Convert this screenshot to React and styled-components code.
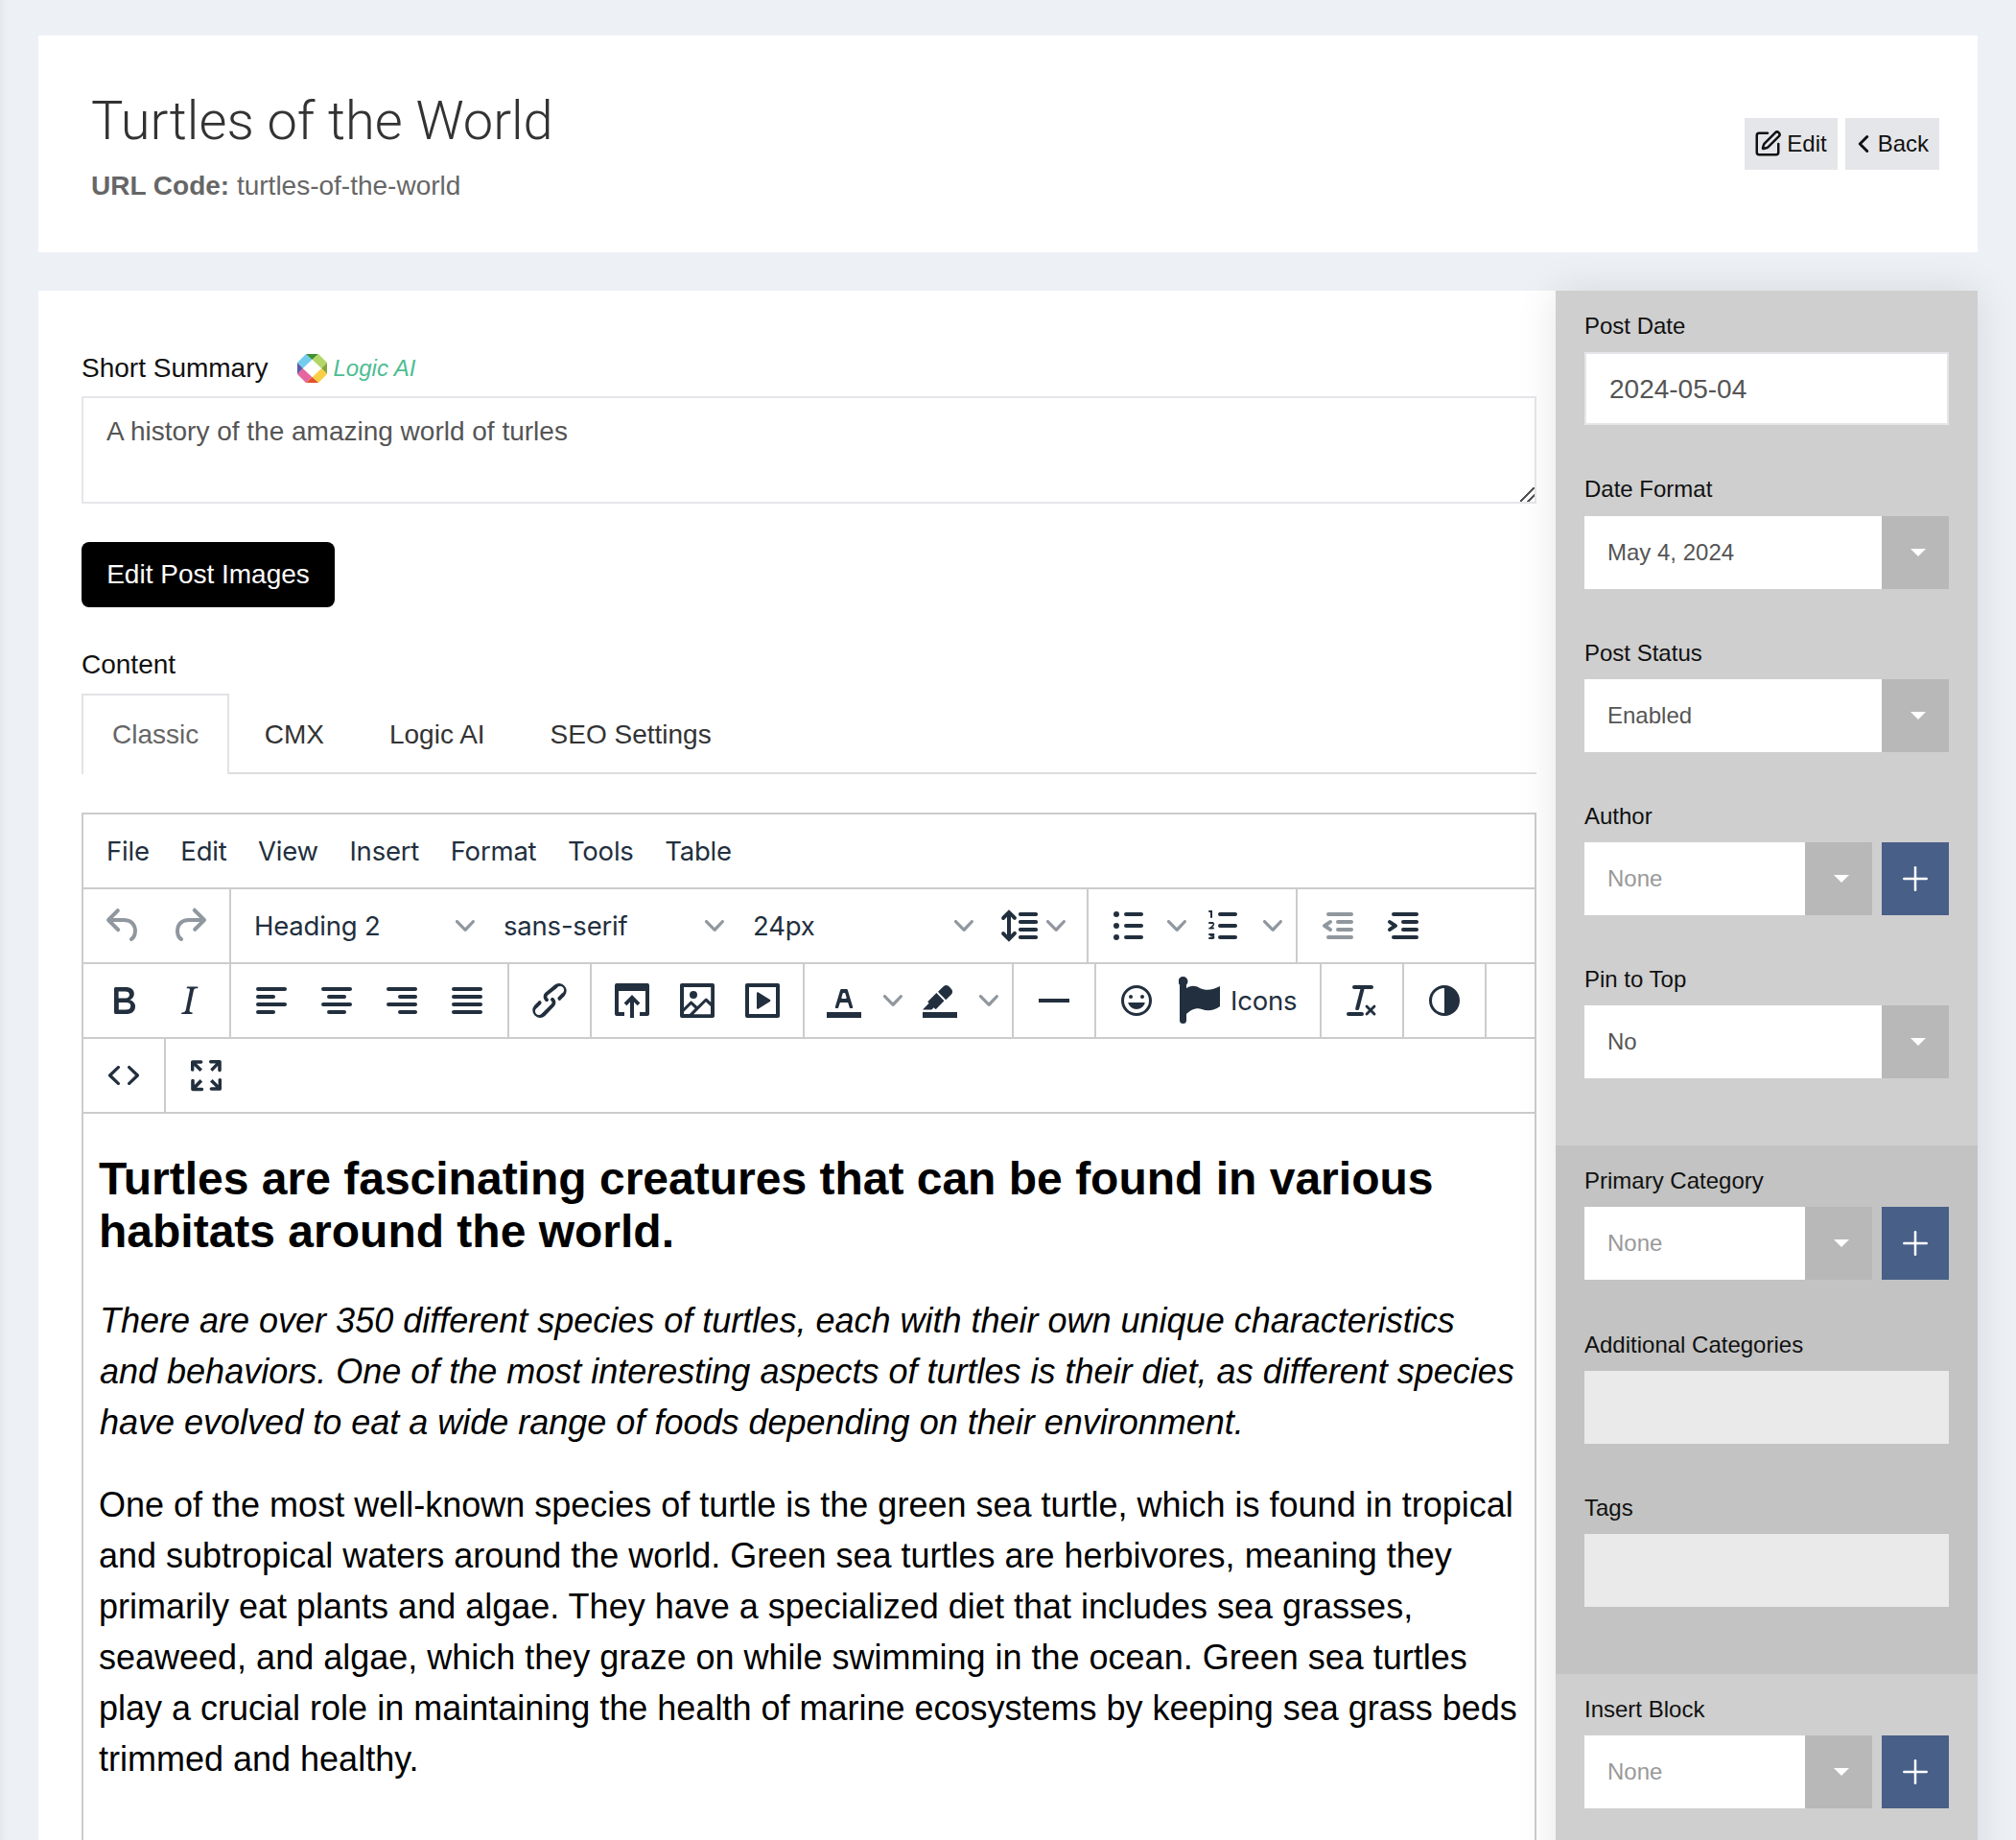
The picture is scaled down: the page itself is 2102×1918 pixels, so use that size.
import React from 'react'
import styled, { createGlobalStyle } from 'styled-components'
import { SquarePen, ChevronLeft, Plus } from 'lucide-react'

const GlobalStyle = createGlobalStyle`
  html, body {
    margin: 0;
    padding: 0;
    height: 100%;
    overflow: hidden;
    background: #edf0f5;
  }
  * { box-sizing: border-box; }
`

// tinymce style icons, 24 unit box
const ICONS = {
  undo: 'M6.4 8H12c3.7 0 6.2 2 6.8 5.1.6 2.7-.4 5.6-2.3 6.8a1 1 0 0 1-1-1.8c1.1-.6 1.8-2.7 1.4-4.6-.5-2.1-2.1-3.5-4.9-3.5H6.4l3.3 3.3a1 1 0 1 1-1.4 1.4l-5-5a1 1 0 0 1 0-1.4l5-5a1 1 0 0 1 1.4 1.4L6.4 8Z',
  redo: 'M17.6 10H12c-2.8 0-4.4 1.4-4.9 3.5-.4 2 .3 4 1.4 4.6a1 1 0 1 1-1 1.8c-2-1.2-2.9-4.1-2.3-6.8.6-3 3-5.1 6.8-5.1h5.6l-3.3-3.3a1 1 0 1 1 1.4-1.4l5 5a1 1 0 0 1 0 1.4l-5 5a1 1 0 0 1-1.4-1.4l3.3-3.3Z',
  bold: 'M7.8 19c-.3 0-.5 0-.6-.2l-.2-.5V5.7c0-.2 0-.4.2-.5l.6-.2h5c1.5 0 2.7.3 3.5 1 .7.6 1.1 1.4 1.1 2.5a3 3 0 0 1-.6 1.9c-.4.6-1 1-1.6 1.2.4.1.9.3 1.3.6s.8.7 1 1.2c.4.4.5 1 .5 1.6 0 1.3-.4 2.3-1.3 3-.8.7-2.1 1-3.8 1H7.8Zm5-8.3c.6 0 1.2-.1 1.6-.5.4-.3.6-.7.6-1.3 0-1.1-.8-1.7-2.3-1.7H9.3v3.5h3.4Zm.5 6c.7 0 1.3-.1 1.7-.4.4-.4.6-.9.6-1.5s-.2-1-.7-1.4c-.4-.3-1-.4-2-.4H9.4v3.8h4Z',
  italic: 'm16.7 4.7-.1.9h-.3c-.6 0-1 0-1.4.3-.3.3-.4.6-.5 1.1l-2.1 9.8v.6c0 .5.4.8 1.4.8h.2l-.2.8H8l.2-.8h.2c1.1 0 1.8-.5 2-1.5l2-9.8.1-.5c0-.6-.4-.8-1.4-.8h-.3l.2-.9h5.8Z',
  alignLeft: 'M5 5h14c.6 0 1 .4 1 1s-.4 1-1 1H5a1 1 0 1 1 0-2Zm0 4h8c.6 0 1 .4 1 1s-.4 1-1 1H5a1 1 0 1 1 0-2Zm0 8h8c.6 0 1 .4 1 1s-.4 1-1 1H5a1 1 0 0 1 0-2Zm0-4h14c.6 0 1 .4 1 1s-.4 1-1 1H5a1 1 0 0 1 0-2Z',
  alignCenter: 'M5 5h14c.6 0 1 .4 1 1s-.4 1-1 1H5a1 1 0 1 1 0-2Zm3 4h8c.6 0 1 .4 1 1s-.4 1-1 1H8a1 1 0 1 1 0-2Zm0 8h8c.6 0 1 .4 1 1s-.4 1-1 1H8a1 1 0 0 1 0-2Zm-3-4h14c.6 0 1 .4 1 1s-.4 1-1 1H5a1 1 0 0 1 0-2Z',
  alignRight: 'M5 5h14c.6 0 1 .4 1 1s-.4 1-1 1H5a1 1 0 1 1 0-2Zm6 4h8c.6 0 1 .4 1 1s-.4 1-1 1h-8a1 1 0 0 1 0-2Zm0 8h8c.6 0 1 .4 1 1s-.4 1-1 1h-8a1 1 0 0 1 0-2Zm-6-4h14c.6 0 1 .4 1 1s-.4 1-1 1H5a1 1 0 0 1 0-2Z',
  justify: 'M5 5h14c.6 0 1 .4 1 1s-.4 1-1 1H5a1 1 0 1 1 0-2Zm0 4h14c.6 0 1 .4 1 1s-.4 1-1 1H5a1 1 0 1 1 0-2Zm0 4h14c.6 0 1 .4 1 1s-.4 1-1 1H5a1 1 0 0 1 0-2Zm0 4h14c.6 0 1 .4 1 1s-.4 1-1 1H5a1 1 0 0 1 0-2Z',
  link: 'M6.2 12.3a1 1 0 0 1 1.4 1.4l-2 2a2 2 0 1 0 2.6 2.8l4.8-4.8a1 1 0 0 0 0-1.4 1 1 0 1 1 1.4-1.3 2.9 2.9 0 0 1 0 4L9.6 20a3.9 3.9 0 0 1-5.5-5.5l2-2Zm11.6-.6a1 1 0 0 1-1.4-1.4l2-2a2 2 0 1 0-2.6-2.8L11 9.3a1 1 0 0 0 0 1.4 1 1 0 1 1-1.4 1.3 2.9 2.9 0 0 1 0-4L14.4 4a3.9 3.9 0 0 1 5.5 5.5l-2 2Z',
  upload: 'M4 3h16a1 1 0 0 1 1 1v15a1 1 0 0 1-1 1h-4v-2h3V7H5v11h3v2H4a1 1 0 0 1-1-1V4a1 1 0 0 1 1-1ZM12 9l4.2 4.2-1.4 1.4-1.8-1.8V21h-2v-8.2l-1.8 1.8-1.4-1.4L12 9Z',
  image: 'm5 15.7 3.3-3.2c.3-.3.7-.3 1 0L12 15l4.1-4c.3-.4.8-.4 1 0l2 1.9V5H5v10.7ZM5 18v1h3l2.8-2.9-2-2L5 17.9Zm14-3-2.5-2.4-6.4 6.5H19v-4ZM4 3h16c.6 0 1 .4 1 1v16c0 .6-.4 1-1 1H4a1 1 0 0 1-1-1V4c0-.6.4-1 1-1Zm6 8a2 2 0 1 0 0-4 2 2 0 0 0 0 4Z',
  media: 'M4 3h16c.6 0 1 .4 1 1v16c0 .6-.4 1-1 1H4a1 1 0 0 1-1-1V4c0-.6.4-1 1-1Zm1 2v14h14V5H5Zm4 3.2c0-.5.5-.8.9-.5l6 3.8c.4.2.4.8 0 1l-6 3.8c-.4.3-.9 0-.9-.5V8.2Z',
  lineHeight: 'M21 5a1 1 0 0 1 .1 2H13a1 1 0 0 1-.1-2H21zm0 4a1 1 0 0 1 .1 2H13a1 1 0 0 1-.1-2H21zm0 4a1 1 0 0 1 .1 2H13a1 1 0 0 1-.1-2H21zm0 4a1 1 0 0 1 .1 2H13a1 1 0 0 1-.1-2H21zM7 3.6l3.7 3.7a1 1 0 0 1-1.3 1.5h-.1L8 7.3v9.2l1.3-1.3a1 1 0 0 1 1.3 0h.1c.4.4.4 1 0 1.3v.1L7 20.4l-3.7-3.7a1 1 0 0 1 1.3-1.5h.1L6 16.7V7.4L4.7 8.7a1 1 0 0 1-1.3 0h-.1a1 1 0 0 1 0-1.3v-.1L7 3.6z',
  bullets: 'M11 5h8c.6 0 1 .4 1 1s-.4 1-1 1h-8a1 1 0 0 1 0-2Zm0 6h8c.6 0 1 .4 1 1s-.4 1-1 1h-8a1 1 0 0 1 0-2Zm0 6h8c.6 0 1 .4 1 1s-.4 1-1 1h-8a1 1 0 0 1 0-2ZM4.5 6a1.5 1.5 0 1 1 3 0 1.5 1.5 0 0 1-3 0Zm0 6a1.5 1.5 0 1 1 3 0 1.5 1.5 0 0 1-3 0Zm0 6a1.5 1.5 0 1 1 3 0 1.5 1.5 0 0 1-3 0Z',
  numbers: 'M10 17h8c.6 0 1 .4 1 1s-.4 1-1 1h-8a1 1 0 0 1 0-2Zm0-6h8c.6 0 1 .4 1 1s-.4 1-1 1h-8a1 1 0 0 1 0-2Zm0-6h8c.6 0 1 .4 1 1s-.4 1-1 1h-8a1 1 0 1 1 0-2ZM6 4v3.5c0 .3-.2.5-.5.5a.5.5 0 0 1-.5-.5V5h-.5a.5.5 0 0 1 0-1H6Zm-1 8.8.2-.3c.6-.7 1-1.1 1.2-1.3a.5.5 0 0 0-.2-.2H4.5a.5.5 0 0 1 0-1h1.7c.5.2.9.6.9 1.2 0 .4-.4 1-1.1 1.6h.5a.5.5 0 1 1 0 1H4.6a.5.5 0 0 1-.4-.8l.8-.2ZM4.5 16h2c.5 0 .7.3.7.7 0 .2-.1.4-.3.6.2.2.3.5.3.7 0 .6-.3 1-.9 1H4.5a.5.5 0 0 1 0-1H6v-.2h-.8a.4.4 0 0 1 0-.8h.8V17H4.5a.5.5 0 0 1 0-1Z',
  outdent: 'M7 5h12c.6 0 1 .4 1 1s-.4 1-1 1H7a1 1 0 1 1 0-2Zm5 4h7c.6 0 1 .4 1 1s-.4 1-1 1h-7a1 1 0 0 1 0-2Zm0 4h7c.6 0 1 .4 1 1s-.4 1-1 1h-7a1 1 0 0 1 0-2Zm-5 4h12a1 1 0 0 1 0 2H7a1 1 0 0 1 0-2Zm1.6-3.800a1 1 0 0 1-1.2 1.600l-3-2a1 1 0 0 1 0-1.600l3-2a1 1 0 0 1 1.2 1.600L6.800 12l1.800 1.200Z',
  indent: 'M7 5h12c.6 0 1 .4 1 1s-.4 1-1 1H7a1 1 0 1 1 0-2Zm5 4h7c.6 0 1 .4 1 1s-.4 1-1 1h-7a1 1 0 0 1 0-2Zm0 4h7c.6 0 1 .4 1 1s-.4 1-1 1h-7a1 1 0 0 1 0-2Zm-5 4h12a1 1 0 0 1 0 2H7a1 1 0 0 1 0-2Zm-2.6-3.800L6.200 12l-1.800-1.200a1 1 0 0 1 1.200-1.600l3 2a1 1 0 0 1 0 1.600l-3 2a1 1 0 1 1-1.200-1.600Z',
  textColor: 'M3 18h18v3H3zM8.700 16h-.8a.5.5 0 0 1-.5-.6l2.700-9c.1-.3.3-.4.5-.4h2.800c.2 0 .4.1.5.4l2.700 9a.5.5 0 0 1-.5.6h-.8a.5.5 0 0 1-.4-.4l-.7-2.200c0-.3-.3-.4-.5-.4h-3.400c-.2 0-.4.1-.5.4l-.7 2.200c0 .3-.2.4-.4.4Zm2.600-7.600-.6 2a.5.5 0 0 0 .5.6h1.600a.5.5 0 0 0 .5-.6l-.6-2c0-.3-.3-.4-.5-.4h-.4c-.2 0-.4.1-.5.4Z',
  highlight: 'M3 18h18v3H3zM7.700 16.700H3l3.300-3.300-.7-.8L10.200 8l4 4.100-4 4.200c-.2.2-.6.2-.8 0l-.6-.7-1.100 1.100zm5-7.500L11 7.400l3-2.900a2 2 0 0 1 2.600 0L18 6c.7.7.7 2 0 2.700l-2.900 2.900-1.800-1.800-.5-.6',
  rule: 'M4 11h16v2H4z',
  emoji: 'M9 11c.6 0 1-.4 1-1s-.4-1-1-1a1 1 0 0 0-1 1c0 .6.4 1 1 1Zm6 0c.6 0 1-.4 1-1s-.4-1-1-1a1 1 0 0 0-1 1c0 .6.4 1 1 1Zm-3 5.500c2.100 0 4-1.500 4.400-3.500H7.600c.5 2 2.300 3.500 4.400 3.500ZM12 4a8 8 0 1 0 0 16 8 8 0 0 0 0-16Zm0 14.500a6.500 6.500 0 1 1 0-13 6.500 6.500 0 0 1 0 13Z',
  clear: 'M13.200 6a1 1 0 0 1 0 .2l-2.600 10a1 1 0 0 1-1 .8h-.2a.8.8 0 0 1-.8-1l2.600-10H8a1 1 0 1 1 0-2h9a1 1 0 0 1 0 2h-3.800ZM5 18h7a1 1 0 0 1 0 2H5a1 1 0 0 1 0-2Zm13 1.500L16.500 18 15 19.500a.7.7 0 0 1-1-1l1.500-1.500-1.500-1.500a.7.7 0 0 1 1-1l1.500 1.500 1.500-1.500a.7.7 0 0 1 1 1L17.500 17l1.500 1.500a.7.7 0 0 1-1 1Z',
  contrast: 'M12 4a8 8 0 1 0 0 16 8 8 0 0 0 0-16Zm0 14.500a6.500 6.500 0 1 1 0-13v13Z',
  code: 'M9.800 15.700c.3.3.3.8 0 1-.3.4-.9.4-1.200 0l-4.400-4.100a.8.8 0 0 1 0-1.200l4.400-4.200c.3-.3.9-.3 1.200 0 .3.3.3.8 0 1.100L6 12l3.800 3.700ZM14.200 15.700c-.3.3-.3.8 0 1 .4.4.9.4 1.200 0l4.400-4.100c.3-.3.3-.9 0-1.200l-4.400-4.200a.8.8 0 0 0-1.200 0c-.3.3-.3.8 0 1.100L18 12l-3.800 3.700Z',
  fullscreen: 'm15.300 10-1.200-1.300 2.900-3h-2.300a.9.9 0 1 1 0-1.700H19c.5 0 .9.4.9.9v4.400a.9.9 0 1 1-1.800 0V7l-2.900 3Zm0 4 3 3v-2.300a.9.9 0 1 1 1.700 0V19c0 .5-.4.9-.9.9h-4.400a.9.9 0 1 1 0-1.800H17l-3-2.900 1.300-1.200ZM10 15.400l-2.900 3h2.300a.9.9 0 1 1 0 1.700H5a.9.9 0 0 1-.9-.9v-4.400a.9.9 0 1 1 1.800 0V17l2.900-3 1.200 1.300ZM8.700 10 5.700 7v2.300a.9.9 0 0 1-1.700 0V5c0-.5.4-.9.9-.9h4.400a.9.9 0 0 1 0 1.800H7l3 2.900-1.300 1.200Z',
}

const Icon = ({ name, muted }) => (
  <Glyph viewBox="0 0 24 24" $muted={muted}>
    <path d={ICONS[name]} />
  </Glyph>
)

const Chevron = () => (
  <Caret viewBox="0 0 10 10">
    <path d="M8.700 2.200c.3-.3.8-.3 1 0 .4.4.4.9 0 1.200L5.700 7.800c-.3.3-.9.3-1.200 0L.2 3.400a.8.8 0 0 1 0-1.200c.3-.3.8-.3 1.100 0L5 6l3.700-3.800Z" />
  </Caret>
)

const LogicLogo = () => (
  <svg width="31" height="30" viewBox="0 0 31 30">
    <polygon fill="#74cdef" points="0,9 9,0 15.5,6 6,15" />
    <polygon fill="#3f8f33" points="9,0 22,0 15.5,6" />
    <polygon fill="#b2d766" points="22,0 31,9 25,15 15.5,6" />
    <polygon fill="#86a53a" points="31,9 31,21 25,15" />
    <polygon fill="#f9cf45" points="31,21 22,30 15.5,24 25,15" />
    <polygon fill="#e2522b" points="22,30 9,30 15.5,24" />
    <polygon fill="#e6659f" points="9,30 0,21 6,15 15.5,24" />
    <polygon fill="#5b5aa6" points="0,21 0,9 6,15" />
    <polygon fill="#fff" points="15.5,6 25,15 15.5,24 6,15" />
  </svg>
)

const FlagIcon = () => (
  <FlagSvg viewBox="0 0 43 50">
    <circle cx="4.500" cy="5" r="5" />
    <rect x="1" y="5" width="7" height="44" rx="3.500" />
    <path d="M7 13C12 9 17 9 22 12C28 15 36 14 43 10V31C36 36 30 36 24 34C18 32 12 35 7 40Z" />
  </FlagSvg>
)

const SelectField = ({ label, value, placeholder, add, gap, labelGap }) => (
  <Field $gap={gap}>
    <FieldLabel $gap={labelGap}>{label}</FieldLabel>
    <SelectRow>
      <SelectBox>
        <SelectValue $placeholder={placeholder}>{value}</SelectValue>
        <SelectCaret />
      </SelectBox>
      {add && (
        <AddButton>
          <Plus size={40} strokeWidth={1.5} color="#fff" />
        </AddButton>
      )}
    </SelectRow>
  </Field>
)

const App = () => {
  return (
    <Page>
      <GlobalStyle />
      <HeaderCard>
        <TitleBlock>
          <Title>Turtles of the World</Title>
          <UrlCode>
            <strong>URL Code:</strong> turtles-of-the-world
          </UrlCode>
        </TitleBlock>
        <HeaderActions>
          <GreyButton>
            <PenIcon size={30} strokeWidth={2} />
            Edit
          </GreyButton>
          <GreyButton>
            <BackIcon size={30} strokeWidth={2.4} />
            Back
          </GreyButton>
        </HeaderActions>
      </HeaderCard>

      <MainCard>
        <EditorColumn>
          <LabelRow>
            <Label>Short Summary</Label>
            <LogicLink>
              <LogicLogo />
              Logic AI
            </LogicLink>
          </LabelRow>
          <Summary readOnly defaultValue="A history of the amazing world of turles" />
          <BlackButton>Edit Post Images</BlackButton>
          <Label>Content</Label>
          <Tabs>
            <Tab $active>Classic</Tab>
            <Tab>CMX</Tab>
            <Tab>Logic AI</Tab>
            <Tab>SEO Settings</Tab>
          </Tabs>

          <Editor>
            <MenuBar>
              {['File', 'Edit', 'View', 'Insert', 'Format', 'Tools', 'Table'].map((m) => (
                <span key={m}>{m}</span>
              ))}
            </MenuBar>
            <ToolRow>
              <Group>
                <ToolButton><Icon name="undo" muted /></ToolButton>
                <ToolButton><Icon name="redo" muted /></ToolButton>
              </Group>
              <Group>
                <SelectButton>Heading 2<Chevron /></SelectButton>
                <SelectButton>sans-serif<Chevron /></SelectButton>
                <SelectButton>24px<Chevron /></SelectButton>
                <SplitButton $gap={5} $width={96}><Icon name="lineHeight" /><Chevron /></SplitButton>
              </Group>
              <Group>
                <SplitButton><Icon name="bullets" /><Chevron /></SplitButton>
                <SplitButton><Icon name="numbers" /><Chevron /></SplitButton>
              </Group>
              <Group>
                <ToolButton><Icon name="outdent" muted /></ToolButton>
                <ToolButton><Icon name="indent" /></ToolButton>
              </Group>
            </ToolRow>
            <ToolRow>
              <Group>
                <ToolButton><Icon name="bold" /></ToolButton>
                <ToolButton><Icon name="italic" /></ToolButton>
              </Group>
              <Group>
                <ToolButton><Icon name="alignLeft" /></ToolButton>
                <ToolButton><Icon name="alignCenter" /></ToolButton>
                <ToolButton><Icon name="alignRight" /></ToolButton>
                <ToolButton><Icon name="justify" /></ToolButton>
              </Group>
              <Group>
                <ToolButton><Icon name="link" /></ToolButton>
              </Group>
              <Group>
                <ToolButton><Icon name="upload" /></ToolButton>
                <ToolButton><Icon name="image" /></ToolButton>
                <ToolButton><Icon name="media" /></ToolButton>
              </Group>
              <Group>
                <SplitButton><Icon name="textColor" /><Chevron /></SplitButton>
                <SplitButton><Icon name="highlight" /><Chevron /></SplitButton>
              </Group>
              <Group>
                <ToolButton><Icon name="rule" /></ToolButton>
              </Group>
              <Group>
                <ToolButton><Icon name="emoji" /></ToolButton>
                <IconsButton><FlagIcon />Icons</IconsButton>
              </Group>
              <Group>
                <ToolButton><Icon name="clear" /></ToolButton>
              </Group>
              <Group>
                <ToolButton><Icon name="contrast" /></ToolButton>
              </Group>
              <Group />
            </ToolRow>
            <ToolRow>
              <Group>
                <ToolButton><Icon name="code" /></ToolButton>
              </Group>
              <Group>
                <ToolButton><Icon name="fullscreen" /></ToolButton>
              </Group>
            </ToolRow>
            <EditorBody>
              <h2>Turtles are fascinating creatures that can be found in various habitats around the world.</h2>
              <p>
                <em>
                  There are over 350 different species of turtles, each with their own unique characteristics and
                  behaviors. One of the most interesting aspects of turtles is their diet, as different species have
                  evolved to eat a wide range of foods depending on their environment.
                </em>
              </p>
              <p>
                One of the most well-known species of turtle is the green sea turtle, which is found in tropical and
                subtropical waters around the world. Green sea turtles are herbivores, meaning they primarily eat
                plants and algae. They have a specialized diet that includes sea grasses, seaweed, and algae, which
                they graze on while swimming in the ocean. Green sea turtles play a crucial role in maintaining the
                health of marine ecosystems by keeping sea grass beds trimmed and healthy.
              </p>
            </EditorBody>
          </Editor>
        </EditorColumn>

        <Sidebar>
          <SideSection>
            <Field>
              <FieldLabel>Post Date</FieldLabel>
              <DateInput readOnly defaultValue="2024-05-04" />
            </Field>
            <SelectField label="Date Format" value="May 4, 2024" labelGap={14} />
            <SelectField label="Post Status" value="Enabled" />
            <SelectField label="Author" value="None" placeholder add />
            <SelectField label="Pin to Top" value="No" />
          </SideSection>
          <SideSection $dark>
            <SelectField label="Primary Category" value="None" placeholder add gap={54} />
            <Field>
              <FieldLabel>Additional Categories</FieldLabel>
              <DisabledBox />
            </Field>
            <Field>
              <FieldLabel>Tags</FieldLabel>
              <DisabledBox />
            </Field>
          </SideSection>
          <SideSection>
            <SelectField label="Insert Block" value="None" placeholder add />
          </SideSection>
        </Sidebar>
      </MainCard>
    </Page>
  )
}

const sans = `"Liberation Sans", Arial, sans-serif`
const uiFont = `Inter, "Liberation Sans", sans-serif`

const Page = styled.div`
  height: 100vh;
  overflow: hidden;
  padding: 37px 40px 0;
  font-family: ${sans};
  box-shadow: inset 10px 0 10px -8px rgba(0, 0, 0, 0.05);
`
const HeaderCard = styled.header`
  height: 226px;
  background: #fff;
  display: flex;
  align-items: center;
  justify-content: space-between;
  padding: 0 40px 0 55px;
`
const TitleBlock = styled.div`
  padding-top: 3px;
`
const Title = styled.h1`
  margin: 0 0 18px;
  font-family: Roboto, ${sans};
  font-weight: 300;
  font-size: 56px;
  line-height: 66px;
  color: #333;
`
const UrlCode = styled.div`
  font-size: 28px;
  line-height: 34px;
  color: #666;
`
const HeaderActions = styled.div`
  display: flex;
  gap: 8px;
`
const GreyButton = styled.button`
  height: 54px;
  border: 0;
  padding: 0 11px;
  display: flex;
  align-items: center;
  gap: 6px;
  background: #e5e6e9;
  color: #111;
  font-family: ${sans};
  font-size: 24px;
`
const PenIcon = styled(SquarePen)`
  margin: 0 -1px 0 -2px;
`
const BackIcon = styled(ChevronLeft)`
  margin: 0 -6px 0 -7px;
`
const MainCard = styled.main`
  margin-top: 40px;
  display: flex;
  background: #fff;
  height: 1700px;
`
const EditorColumn = styled.section`
  flex: 1;
  min-width: 0;
  padding: 61px 20px 0 45px;
`
const LabelRow = styled.div`
  display: flex;
  align-items: center;
  gap: 30px;
`
const Label = styled.div`
  font-size: 28px;
  line-height: 40px;
  color: #111;
`
const LogicLink = styled.span`
  display: flex;
  align-items: center;
  gap: 7px;
  font-size: 24px;
  font-style: italic;
  color: #4dbd92;
`
const Summary = styled.textarea`
  display: block;
  width: 100%;
  height: 112px;
  margin-top: 9px;
  padding: 18px 24px 0;
  border: 2px solid #e6e6ea;
  outline: none;
  resize: vertical;
  font-family: ${sans};
  font-size: 28px;
  line-height: 34px;
  color: #555;

  &::-webkit-resizer {
    background: linear-gradient(
      135deg,
      transparent 46%,
      #555 46%,
      #555 54%,
      transparent 54%,
      transparent 73%,
      #555 73%,
      #555 81%,
      transparent 81%
    );
  }
`
const BlackButton = styled.button`
  display: block;
  margin: 40px 0 40px;
  height: 68px;
  width: 264px;
  border: 0;
  border-radius: 8px;
  background: #000;
  color: #fff;
  font-family: ${sans};
  font-size: 28px;
`
const Tabs = styled.div`
  display: flex;
  gap: 5px;
  margin: 10px 0 40px;
  border-bottom: 2px solid #ddd;
`
const Tab = styled.div`
  height: 84px;
  margin-bottom: -2px;
  padding: 0 ${(p) => (p.$active ? '30px' : '29.5px')};
  display: flex;
  align-items: center;
  font-size: 28px;
  color: ${(p) => (p.$active ? '#666' : '#333')};
  background: ${(p) => (p.$active ? '#fff' : 'transparent')};
  border: 2px solid ${(p) => (p.$active ? '#e3e3e6' : 'transparent')};
  border-bottom: 0;
`
const Editor = styled.div`
  border: 2px solid #ccc;
  color: #222f3e;
  font-family: ${uiFont};
  font-size: 27.5px;
  letter-spacing: -0.2px;
`
const MenuBar = styled.div`
  height: 78px;
  display: flex;
  align-items: center;
  gap: 32.5px;
  padding: 0 24px;
  border-bottom: 2px solid #ccc;
`
const ToolRow = styled.div`
  height: 78px;
  display: flex;
  border-bottom: 2px solid #ccc;
`
const Group = styled.div`
  display: flex;
  align-items: center;
  padding: 0 8px;
  & + & {
    border-left: 2px solid #ccc;
  }
`
const ToolButton = styled.div`
  width: 68px;
  height: 68px;
  display: flex;
  align-items: center;
  justify-content: center;
`
const Glyph = styled.svg`
  width: 48px;
  height: 48px;
  flex: none;
  fill: ${(p) => (p.$muted ? 'rgba(34, 47, 62, 0.5)' : '#222f3e')};
`
const Caret = styled.svg`
  width: 20px;
  height: 20px;
  flex: none;
  fill: rgba(34, 47, 62, 0.5);
`
const SelectButton = styled.div`
  width: 260px;
  height: 68px;
  padding: 0 14px 0 16px;
  display: flex;
  align-items: center;
  justify-content: space-between;
  white-space: nowrap;
`
const SplitButton = styled.div`
  width: ${(p) => p.$width || 100}px;
  height: 68px;
  padding-left: 9px;
  display: flex;
  align-items: center;
  gap: ${(p) => (p.$gap === undefined ? 17 : p.$gap)}px;
`
const IconsButton = styled.div`
  width: 149px;
  height: 68px;
  padding-left: 10px;
  display: flex;
  align-items: center;
  gap: 11px;
`
const FlagSvg = styled.svg`
  width: 43px;
  height: 50px;
  flex: none;
  fill: #222f3e;
`
const EditorBody = styled.div`
  padding: 40px 16px;
  background: #fff;
  font-family: ${sans};
  color: #000;
  font-size: 36px;
  line-height: 53px;
  letter-spacing: 0;

  h2 {
    margin: 0 0 39px;
    font-size: 48px;
    line-height: 55px;
    font-weight: 700;
  }
  p {
    margin: 0 0 32.5px;
  }
  em {
    display: block;
    margin-left: 1px;
  }
`
const Sidebar = styled.aside`
  width: 440px;
  flex: none;
  display: flex;
  flex-direction: column;
  background: #cfcfcf;
  box-shadow: 0 0 40px rgba(0, 0, 0, 0.1);
`
const SideSection = styled.div`
  padding: 23px 30px 17px;
  background: ${(p) => (p.$dark ? '#c2c3c2' : '#cfcfcf')};
`
const Field = styled.div`
  margin-bottom: ${(p) => p.$gap || 53}px;
`
const FieldLabel = styled.div`
  height: 28px;
  margin-bottom: ${(p) => p.$gap || 13}px;
  font-size: 24px;
  line-height: 28px;
  color: #111;
`
const DateInput = styled.input`
  display: block;
  width: 100%;
  height: 76px;
  padding: 1px 24px 0;
  border: 2px solid #e6e6ea;
  outline: none;
  background: #fff;
  font-family: ${sans};
  font-size: 28px;
  color: #555;
`
const SelectRow = styled.div`
  display: flex;
  gap: 10px;
`
const SelectBox = styled.div`
  flex: 1;
  height: 76px;
  display: flex;
  align-items: center;
  padding-left: 24px;
  background: linear-gradient(to left, #b8b8b8 70px, #fff 70px);
`
const SelectValue = styled.span`
  flex: 1;
  font-size: 24px;
  color: ${(p) => (p.$placeholder ? '#999' : '#555')};
`
const SelectCaret = styled.i`
  width: 0;
  height: 0;
  margin-right: 24px;
  border-left: 8px solid transparent;
  border-right: 8px solid transparent;
  border-top: 8px solid #fff;
`
const AddButton = styled.div`
  width: 70px;
  height: 76px;
  display: flex;
  align-items: center;
  justify-content: center;
  background: #486088;
`
const DisabledBox = styled.div`
  height: 76px;
  background: #eaeaea;
`

export default App
